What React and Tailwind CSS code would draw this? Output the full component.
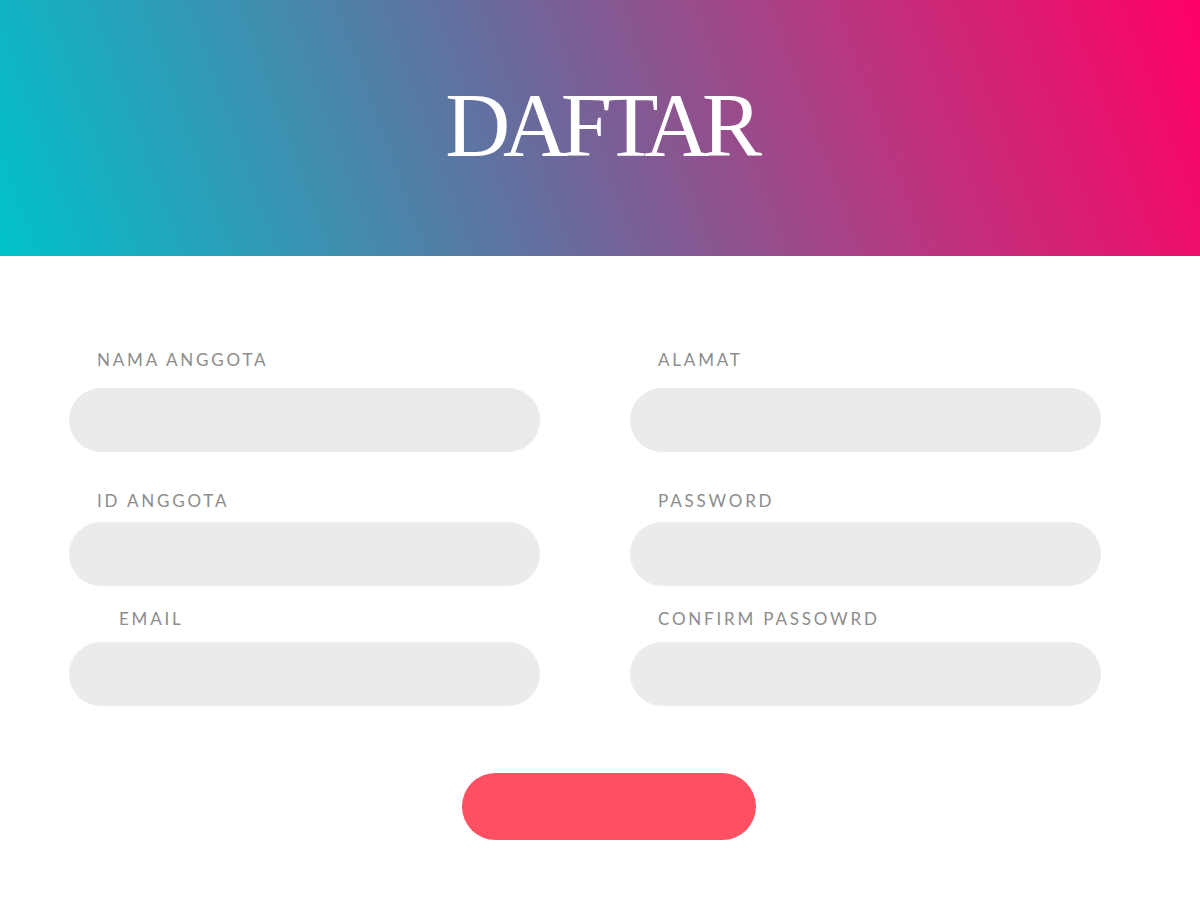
import React from 'react';

const Field = ({ label, indent = 'pl-7', gap = 'mt-4' }) => (
    <div className="flex flex-col">
        <label className={`${indent} h-6 leading-6 text-[17px] tracking-[0.165em] text-[#8c8c8c] uppercase`} style={{ fontFamily: 'Lato, "Open Sans", sans-serif' }}>
            {label}
        </label>
        <div className={`${gap} h-16 w-[471px] rounded-full bg-[#ebebeb]`} />
    </div>
);

export default function App() {
    return (
        <div className="w-[1200px] h-[900px] bg-white overflow-hidden">
            {/* HEADER */}
            <div className="h-[256px] bg-[linear-gradient(70deg,#00c2cb_0%,#6a6a9c_45%,#c2307c_75%,#ff0066_100%)] flex items-center justify-center">
                <h1 className="text-white text-[90px] leading-none tracking-[-0.08em] pb-1" style={{ fontFamily: '"Liberation Serif", serif' }}>
                    DAFTAR
                </h1>
            </div>

            {/* FORM */}
            <div className="pl-[69px] pt-[92px]">
                <div className="grid grid-cols-[471px_471px] gap-x-[90px]">
                    <Field label="Nama Anggota" />
                    <Field label="Alamat" />
                </div>
                <div className="grid grid-cols-[471px_471px] gap-x-[90px] mt-[37px]">
                    <Field label="ID Anggota" gap="mt-[9px]" />
                    <Field label="Password" gap="mt-[9px]" />
                </div>
                <div className="grid grid-cols-[471px_471px] gap-x-[90px] mt-[21px]">
                    <Field label="Email" indent="pl-[50px]" gap="mt-[11px]" />
                    <Field label="Confirm Passowrd" gap="mt-[11px]" />
                </div>
            </div>

            <div className="flex justify-center pl-[18px] mt-[67px]">
                <button className="w-[294px] h-[67px] rounded-full bg-[#ff4f62]" />
            </div>
        </div>
    );
}
